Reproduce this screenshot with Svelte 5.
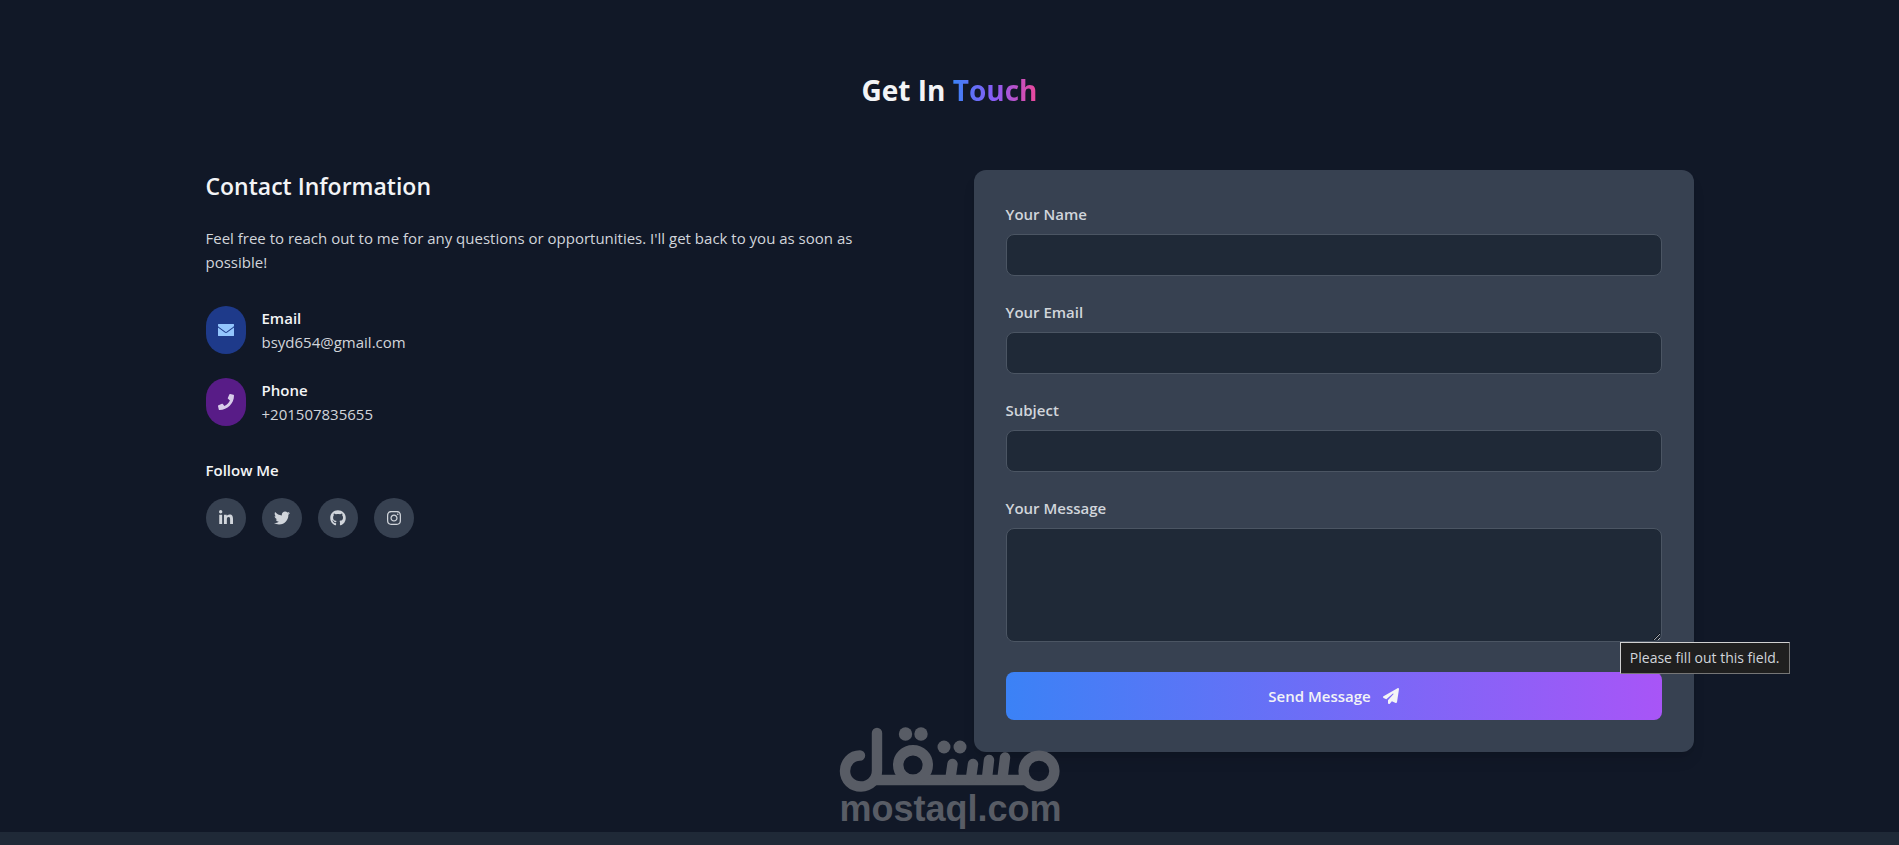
<script lang="ts">
    let name = $state("");
    let email = $state("");
    let subject = $state("");
    let message = $state("");

    const contacts = [
        {
            kind: "email",
            title: "Email",
            value: "bsyd654@gmail.com",
            path: "M16 64C7 64 0 71 0 80v42c0 11 7.1 21.300 19.200 30.400L236.800 313.600c11.400 8.500 27 8.500 38.400 0L492.800 152.400c12.100-9.100 19.200-19.300 19.200-30.400V80c0-9-7-16-16-16H16zM0 176V428c0 11 9 20 20 20H492c11 0 20-9 20-20V176L294.400 339.200c-22.800 17.100-54 17.100-76.800 0L0 176z",
        },
        {
            kind: "phone",
            title: "Phone",
            value: "+201507835655",
            path: "M493.4 24.6l-104-24c-11.3-2.6-22.9 3.3-27.5 13.9l-48 112c-4.2 9.8-1.4 21.3 6.9 28l60.6 49.6c-36 76.7-98.9 140.5-177.2 177.2l-49.6-60.6c-6.8-8.3-18.2-11.1-28-6.9l-112 48C3.9 366.5-2 378.1.6 389.4l24 104C27.1 504.2 36.7 512 48 512c256.1 0 464-207.5 464-464 0-11.2-7.7-20.9-18.6-23.4z",
        },
    ];

    const socials = [
        {
            label: "LinkedIn",
            viewBox: "0 0 448 512",
            path: "M100.28 448H7.4V148.9h92.88zM53.79 108.1C24.09 108.1 0 83.5 0 53.8a53.79 53.79 0 0 1 107.58 0c0 29.7-24.1 54.3-53.79 54.3zM447.9 448h-92.68V302.4c0-34.7-.7-79.2-48.29-79.2-48.29 0-55.69 37.7-55.69 76.7V448h-92.78V148.9h89.08v40.8h1.3c12.4-23.5 42.69-48.3 87.88-48.3 94 0 111.28 61.9 111.28 142.3V448z",
        },
        {
            label: "Twitter",
            viewBox: "0 0 512 512",
            path: "M459.37 151.716c.325 4.548.325 9.097.325 13.645 0 138.72-105.583 298.558-298.558 298.558-59.452 0-114.68-17.219-161.137-47.106 8.447.974 16.568 1.299 25.34 1.299 49.055 0 94.213-16.568 130.274-44.832-46.132-.975-84.792-31.188-98.112-72.772 6.498.974 12.995 1.624 19.818 1.624 9.421 0 18.843-1.3 27.614-3.573-48.081-9.747-84.143-51.98-84.143-102.985v-1.299c13.969 7.797 30.214 12.67 47.431 13.319-28.264-18.843-46.781-51.005-46.781-87.391 0-19.492 5.197-37.36 14.294-52.954 51.655 63.675 129.3 105.258 216.365 109.807-1.624-7.797-2.599-15.918-2.599-24.04 0-57.828 46.782-104.934 104.934-104.934 30.213 0 57.502 12.67 76.67 33.137 23.715-4.548 46.456-13.32 66.599-25.34-7.798 24.366-24.366 44.833-46.132 57.827 21.117-2.273 41.584-8.122 60.426-16.243-14.292 20.791-32.161 39.308-52.628 54.253z",
        },
        {
            label: "GitHub",
            viewBox: "0 0 496 512",
            path: "M244.8 8C106.1 8 0 113.3 0 252c0 110.9 69.8 205.8 169.5 239.2 12.8 2.3 17.3-5.6 17.3-12.1 0-6.2-.3-40.4-.3-61.4 0 0-70 15-84.7-29.8 0 0-11.4-29.1-27.8-36.6 0 0-22.9-15.7 1.6-15.4 0 0 24.9 2 38.6 25.8 21.9 38.6 58.6 27.5 72.9 20.9 2.3-16 8.8-27.1 16-33.7-55.9-6.2-112.3-14.3-112.3-110.5 0-27.5 7.6-41.3 23.6-58.9-2.6-6.5-11.1-33.3 2.6-67.9 20.9-6.5 69 27 69 27 20-5.6 41.5-8.5 62.8-8.5s42.8 2.9 62.8 8.5c0 0 48.1-33.6 69-27 13.7 34.7 5.2 61.4 2.6 67.9 16 17.7 25.8 31.5 25.8 58.9 0 96.5-58.9 104.2-114.8 110.5 9.2 7.9 17 22.9 17 46.4 0 33.7-.3 75.4-.3 83.6 0 6.5 4.6 14.4 17.3 12.1C428.2 457.8 496 362.9 496 252 496 113.3 383.5 8 244.8 8z",
        },
        {
            label: "Instagram",
            viewBox: "0 0 448 512",
            path: "M224.1 141c-63.6 0-114.9 51.3-114.9 114.9s51.3 114.9 114.9 114.9S339 319.5 339 255.9 287.7 141 224.1 141zm0 189.6c-41.1 0-74.7-33.5-74.7-74.7s33.5-74.7 74.7-74.7 74.7 33.5 74.7 74.7-33.6 74.7-74.7 74.7zm146.4-194.3c0 14.9-12 26.8-26.8 26.8-14.9 0-26.8-12-26.8-26.8s12-26.8 26.8-26.8 26.8 12 26.8 26.8zm76.1 27.2c-1.7-35.9-9.9-67.7-36.2-93.9-26.2-26.2-58-34.4-93.9-36.2-37-2.1-147.9-2.1-184.9 0-35.8 1.7-67.6 9.9-93.9 36.1s-34.4 58-36.2 93.9c-2.1 37-2.1 147.9 0 184.9 1.7 35.9 9.9 67.7 36.2 93.9s58 34.4 93.9 36.2c37 2.1 147.9 2.1 184.9 0 35.9-1.7 67.7-9.9 93.9-36.2 26.2-26.2 34.4-58 36.2-93.9 2.1-37 2.1-147.8 0-184.8zM398.8 388c-7.8 19.6-22.9 34.7-42.6 42.6-29.5 11.7-99.5 9-132.1 9s-102.7 2.6-132.1-9c-19.6-7.8-34.7-22.9-42.6-42.6-11.7-29.5-9-99.5-9-132.1s-2.6-102.7 9-132.1c7.8-19.6 22.9-34.7 42.6-42.6 29.5-11.7 99.5-9 132.1-9s102.7-2.6 132.1 9c19.6 7.8 34.7 22.9 42.6 42.6 11.7 29.5 9 99.5 9 132.1s2.7 102.7-9 132.1z",
        },
    ];
</script>

<section class="contact">
    <div class="container">
        <h2>Get In <span class="accent">Touch</span></h2>

        <div class="columns">
            <div class="info">
                <h3>Contact Information</h3>
                <p class="intro">
                    Feel free to reach out to me for any questions or opportunities. I'll get back to you as soon as possible!
                </p>

                <div class="contacts">
                    {#each contacts as item}
                        <div class="contact-item">
                            <div class="badge {item.kind}">
                                <svg viewBox="0 0 512 512" aria-hidden="true"><path d={item.path} /></svg>
                            </div>
                            <div>
                                <h4>{item.title}</h4>
                                <p>{item.value}</p>
                            </div>
                        </div>
                    {/each}
                </div>

                <h4>Follow Me</h4>
                <div class="socials">
                    {#each socials as social}
                        <a href="#{social.label.toLowerCase()}" aria-label={social.label}>
                            <svg viewBox={social.viewBox} aria-hidden="true"><path d={social.path} /></svg>
                        </a>
                    {/each}
                </div>
            </div>

            <form onsubmit={(e) => e.preventDefault()}>
                <div class="field">
                    <label for="name">Your Name</label>
                    <input id="name" type="text" bind:value={name} required />
                </div>
                <div class="field">
                    <label for="email">Your Email</label>
                    <input id="email" type="email" bind:value={email} required />
                </div>
                <div class="field">
                    <label for="subject">Subject</label>
                    <input id="subject" type="text" bind:value={subject} required />
                </div>
                <div class="field message">
                    <label for="message">Your Message</label>
                    <textarea id="message" rows="4" bind:value={message} required></textarea>
                    <div class="tooltip" role="tooltip">Please fill out this field.</div>
                </div>
                <button type="submit">
                    Send Message
                    <svg viewBox="0 0 512 512" aria-hidden="true">
                        <path d="M498.1 5.6c10.1 7 15.4 19.1 13.5 31.2l-64 416c-1.5 9.7-7.4 18.2-16 23s-18.9 5.4-28 1.6L284 427.7l-68.5 74.1c-8.9 9.7-22.9 12.9-35.2 8.1S160 493.2 160 480V396.4c0-4 1.5-7.8 4.2-10.7L331.8 202.8c5.8-6.3 5.6-16-.4-22s-15.7-6.4-22-.7L106 360.8 17.7 316.6C7.1 311.3 .3 300.7 0 288.9s5.9-22.8 16.1-28.7l448-256c10.7-6.1 23.9-5.5 34 1.4z" />
                    </svg>
                </button>
            </form>
        </div>
    </div>

    <div class="watermark">
        <svg viewBox="0 0 220 64" role="img" aria-label="مستقل">
            <g fill="none" stroke="currentColor" stroke-width="10.4" stroke-linecap="round">
                <path d="M20 28.500C11 28.500 5 36 5 44c0 9 7 15.500 16 15.500s16-7 16-16V6" />
                <path d="M34 53H188" stroke-linecap="butt" />
                <circle cx="73" cy="38" r="14.800" />
                <circle cx="199" cy="44" r="15.400" />
                <path d="M110.500 51L112.500 37M131 51L133 37M147 51L149 33M162.500 51L165 30.500" />
            </g>
            <g fill="currentColor">
                <circle cx="65.500" cy="7" r="6.700" />
                <circle cx="81" cy="7" r="6.700" />
                <circle cx="104" cy="20" r="6.500" />
                <circle cx="120" cy="20" r="6.500" />
            </g>
        </svg>
        <span>mostaql.com</span>
    </div>
</section>
<footer></footer>

<style>
    :global(body) {
        margin: 0;
        background: #111827;
        color: #f3f4f6;
        font-family: "Segoe UI", "Open Sans", "Noto Sans", sans-serif;
        font-size: 15px;
        line-height: 24px;
    }

    h2, h3, h4, p {
        margin: 0;
    }

    svg {
        fill: currentColor;
    }

    .contact {
        position: relative;
        padding: 72px 0 80px;
    }

    .container {
        box-sizing: border-box;
        max-width: 1536px;
        margin: 0 auto;
        padding: 0 24px;
    }

    h2 {
        margin-bottom: 62px;
        font-size: 28px;
        font-weight: 700;
        line-height: 36px;
        text-align: center;
    }

    .accent {
        background: linear-gradient(to right, #3b82f6, #8b5cf6, #ec4899);
        background-clip: text;
        -webkit-background-clip: text;
        color: transparent;
    }

    .columns {
        display: grid;
        grid-template-columns: 1fr 1fr;
        gap: 48px;
    }

    .info {
        padding-right: 24px;
    }

    h3 {
        margin-bottom: 24px;
        font-size: 23px;
        font-weight: 600;
        line-height: 32px;
    }

    h4 {
        font-size: 15px;
        font-weight: 600;
    }

    p {
        color: #d1d5db;
    }

    .intro {
        margin-bottom: 32px;
    }

    .contacts {
        display: flex;
        flex-direction: column;
        gap: 24px;
        margin-bottom: 32px;
    }

    .contact-item {
        display: flex;
        gap: 16px;
    }

    .badge {
        display: flex;
        align-items: center;
        justify-content: center;
        width: 40px;
        border-radius: 20px;
    }

    .badge svg, .socials svg, button svg {
        width: 16px;
        height: 16px;
    }

    .badge.email {
        background: #1e3a8a;
        color: #93c5fd;
    }

    .badge.phone {
        background: #581c87;
        color: #d8ccea;
    }

    .socials {
        display: flex;
        gap: 16px;
        margin-top: 16px;
    }

    .socials a {
        display: flex;
        align-items: center;
        justify-content: center;
        width: 40px;
        height: 40px;
        border-radius: 50%;
        background: #374151;
        color: #d1d5db;
    }

    form {
        padding: 32px;
        border-radius: 12px;
        background: #374151;
        box-shadow: 0 10px 15px -3px rgba(0, 0, 0, 0.1), 0 4px 6px -4px rgba(0, 0, 0, 0.1);
    }

    .field {
        display: flex;
        flex-direction: column;
        gap: 8px;
        margin-bottom: 24px;
    }

    .message {
        position: relative;
        margin-bottom: 30px;
    }

    label {
        color: #d1d5db;
        font-weight: 600;
    }

    input, textarea {
        box-sizing: border-box;
        width: 100%;
        padding: 8px 16px;
        border: 1px solid #4b5563;
        border-radius: 8px;
        background: #1f2937;
        color: #f3f4f6;
        font: inherit;
    }

    .tooltip {
        position: absolute;
        top: 100%;
        right: -128px;
        z-index: 1;
        padding: 3px 9px;
        border: 1px solid #767676;
        border-top-color: #d0d0d0;
        border-left-color: #d0d0d0;
        background: #1f1f1f;
        color: #d1d5db;
        font-size: 14px;
        white-space: nowrap;
    }

    button {
        display: flex;
        align-items: center;
        justify-content: center;
        gap: 12px;
        width: 100%;
        padding: 12px 24px;
        border: 0;
        border-radius: 8px;
        background: linear-gradient(to right, #3b82f6, #a855f7);
        color: #f3f4f6;
        font: inherit;
        font-weight: 600;
        cursor: pointer;
    }

    .watermark {
        position: absolute;
        bottom: 5px;
        left: 50%;
        width: 220px;
        transform: translateX(-50%);
        color: #585c65;
        font-family: "Liberation Sans", Arial, sans-serif;
        font-size: 36px;
        font-weight: 700;
        line-height: 36px;
        pointer-events: none;
    }

    .watermark svg {
        display: block;
        width: 220px;
        height: 64px;
        overflow: visible;
    }

    footer {
        height: 13px;
        background: #1f2937;
    }
</style>
